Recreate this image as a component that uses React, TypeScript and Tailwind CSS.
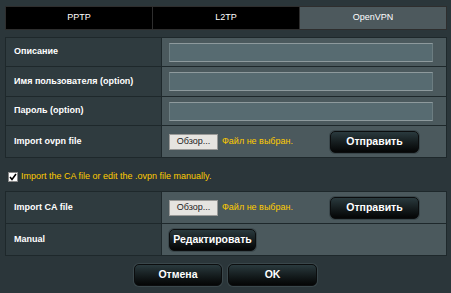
import React from "react";

const font = { fontFamily: '"Liberation Sans", Arial, sans-serif' };

function Btn({ children, w }: { children: React.ReactNode; w: string }) {
  return (
    <div
      className={`${w} h-[22px] flex items-center justify-center rounded-[5px] border border-[#0b0d0e] bg-gradient-to-b from-[#2a3a3e] to-[#050606] text-white font-bold text-[10.5px] shadow-[0_0_0_1px_#3a474b]`}
    >
      {children}
    </div>
  );
}

function FileInput() {
  return (
    <div className="flex items-center w-[161px]">
      <div className="w-[49px] h-[16px] flex items-center justify-center bg-[#e6e4e0] border border-[#9a9a98] text-[#222] text-[9px]">
        Обзор...
      </div>
      <span className="ml-[4px] text-[#ffcc00] text-[9px]">Файл не выбран.</span>
    </div>
  );
}

function Input() {
  return (
    <div className="w-[264px] h-[19px] bg-[#576b71] border border-[#6c7d81] border-t-[#8e9a9d] border-b-[#8e9a9d]" />
  );
}

function Row({
  label,
  h,
  children,
  last,
}: {
  label: string;
  h: string;
  children: React.ReactNode;
  last?: boolean;
}) {
  return (
    <div className={`flex ${h} ${last ? "" : "border-b border-[#1e282b]"}`}>
      <div className="w-[156px] bg-[#2f3b3f] border-r border-[#1e282b] flex items-center pl-[8px] text-white font-bold text-[9px]">
        {label}
      </div>
      <div className="flex-1 bg-[#4b595d] flex items-center pl-[7px]">{children}</div>
    </div>
  );
}

export default function App() {
  return (
    <div className="w-[451px] h-[293px] bg-[#2b363a] pt-[6px] overflow-hidden" style={font}>
      <div className="ml-[5px] w-[442px] h-[24px] flex border border-[#2e2e2e] text-[9px]">
        <div className="flex-1 bg-black text-white flex items-center justify-center border-r border-[#2e2e2e]">
          PPTP
        </div>
        <div className="flex-1 bg-black text-white flex items-center justify-center border-r border-[#2e2e2e]">
          L2TP
        </div>
        <div className="flex-1 bg-[#4d595d] text-white flex items-center justify-center">
          OpenVPN
        </div>
      </div>

      <div className="ml-[5px] mt-[7px] w-[442px] border border-[#1e282b]">
        <Row label="Описание" h="h-[29px]">
          <Input />
        </Row>
        <Row label="Имя пользователя (option)" h="h-[30px]">
          <Input />
        </Row>
        <Row label="Пароль (option)" h="h-[29px]">
          <Input />
        </Row>
        <Row label="Import ovpn file" h="h-[31px]" last>
          <FileInput />
          <Btn w="w-[89px]">Отправить</Btn>
        </Row>
      </div>

      <div className="mt-[13px] h-[12px] ml-[8px] flex items-center">
        <div className="w-[10px] h-[10px] bg-white border border-[#888] flex items-center justify-center">
          <svg width="8" height="8" viewBox="0 0 8 8">
            <path d="M1 4 L3 6.5 L7 1" stroke="#000" strokeWidth="1.6" fill="none" />
          </svg>
        </div>
        <span className="ml-[3px] text-[#ffcc00] text-[9px]">
          Import the CA file or edit the .ovpn file manually.
        </span>
      </div>

      <div className="ml-[5px] mt-[8px] w-[442px] border border-[#1e282b]">
        <Row label="Import CA file" h="h-[32px]">
          <FileInput />
          <Btn w="w-[89px]">Отправить</Btn>
        </Row>
        <Row label="Manual" h="h-[31px]" last>
          <Btn w="w-[87px]">Редактировать</Btn>
        </Row>
      </div>

      <div className="mt-[8px] flex justify-center gap-[6px]">
        <Btn w="w-[88px]">Отмена</Btn>
        <Btn w="w-[89px]">OK</Btn>
      </div>
    </div>
  );
}
